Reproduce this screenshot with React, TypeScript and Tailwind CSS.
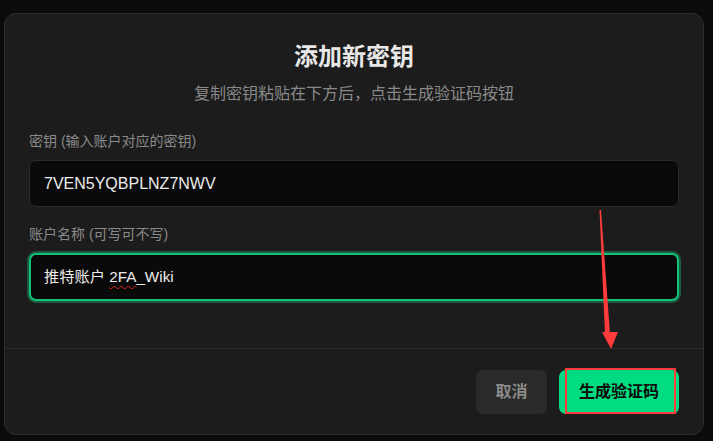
export default function App() {
  const font = { fontFamily: '"Liberation Sans", "Noto Sans CJK SC", sans-serif' };
  return (
    <div className="relative w-[713px] h-[441px] bg-[#0b0b0b] pt-[13px] pl-[4px]" style={font}>
      <div className="w-[700px] h-[422px] rounded-[12px] border border-[#2c2c2c] bg-[#1c1c1c] flex flex-col">
        <div className="px-[24px] pt-[27px] flex flex-col">
          <h1 className="text-center text-[24px] leading-[32px] font-bold text-[#e8e8e8]">添加新密钥</h1>
          <p className="mt-[10px] text-center text-[16px] leading-[22px] text-[#8a8a8a]">复制密钥粘贴在下方后，点击生成验证码按钮</p>
          <label className="mt-[26px] text-[14px] leading-[20px] text-[#8a8a8a]">密钥 (输入账户对应的密钥)</label>
          <div className="mt-[9px] h-[47px] rounded-[7px] border border-[#2a2a2a] bg-[#0a0a0a] flex items-center px-[14px] text-[16px] text-[#ececec]">
            7VEN5YQBPLNZ7NWV
          </div>
          <label className="mt-[17px] text-[14px] leading-[20px] text-[#8a8a8a]">账户名称 (可写可不写)</label>
          <div className="mt-[9px] h-[48px] rounded-[7px] border-2 border-[#12c27a] bg-[#0a0a0a] ring-2 ring-[#1b5a3c] flex items-center px-[13px] text-[15.25px] text-[#ececec]">
            <span>推特账户&nbsp;</span>
            <span className="underline decoration-wavy decoration-[#e01b1b] decoration-1 underline-offset-[3px]">2FA</span>
            <span>_Wiki</span>
          </div>
        </div>
        <div className="mt-auto border-t border-[#2c2c2c] h-[86px] flex items-center justify-end gap-[12px] px-[24px] pt-[1px]">
          <button className="w-[71px] h-[44px] rounded-[7px] bg-[#2a2a2a] text-[16px] font-bold text-[#8a8a8a]">取消</button>
          <button className="w-[120px] h-[44px] rounded-[7px] bg-[#00dc82] text-[16px] font-bold text-[#0a0a0a]">生成验证码</button>
        </div>
      </div>
      <div className="absolute left-[565px] top-[368px] w-[111px] h-[46px] border-[2.5px] border-[#ff3b3b] pointer-events-none" />
      <svg className="absolute left-0 top-0 pointer-events-none" width="713" height="441" viewBox="0 0 713 441">
        <polygon points="599.5,210 601,210 610,334 605,334" fill="#ff3b3b" />
        <polygon points="602,332 618,332 611,349" fill="#ff3b3b" />
      </svg>
    </div>
  );
}
